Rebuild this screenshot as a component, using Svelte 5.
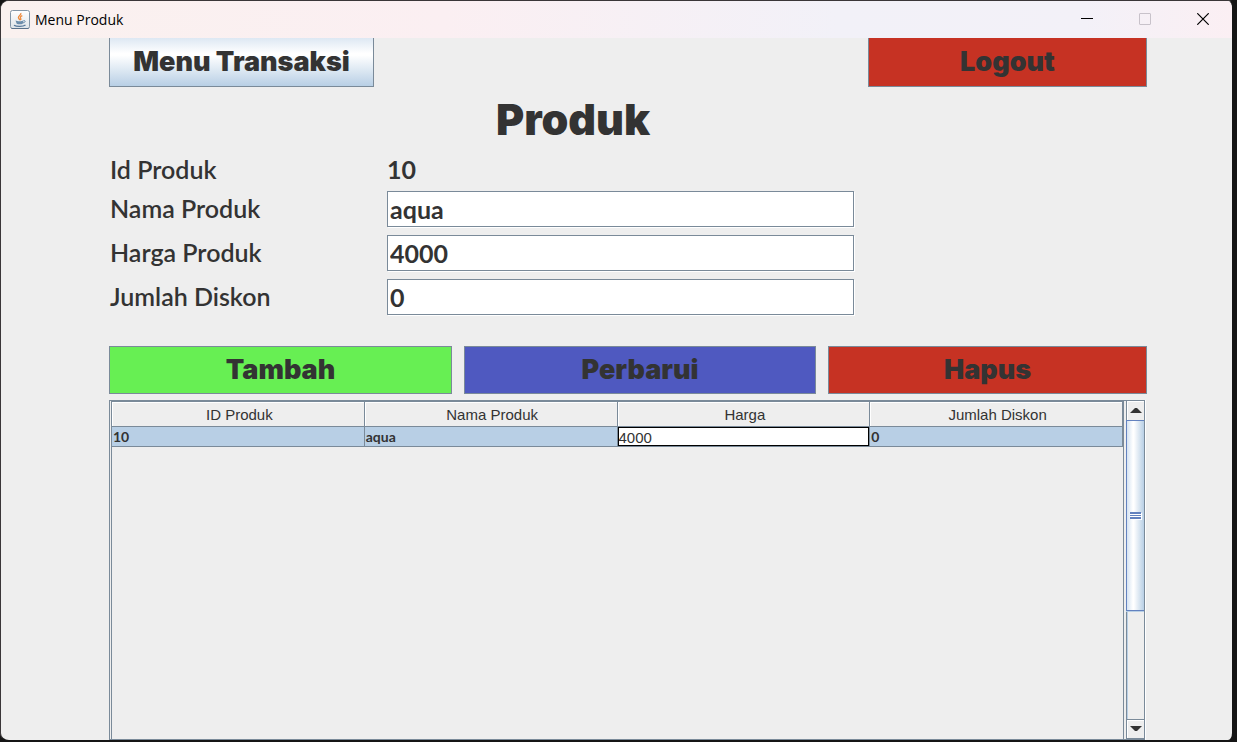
<script>
	let produk = $state({ id: '10', nama: 'aqua', harga: '4000', diskon: '0' });
	let editor = $state('4000');
</script>

<svelte:head>
	<title>Menu Produk</title>
</svelte:head>

<div class="window">
	<header class="titlebar">
		<svg class="titlebar__icon" viewBox="0 0 20 20" aria-hidden="true">
			<defs>
				<linearGradient id="plate" x1="0" y1="0" x2="0" y2="1">
					<stop offset="0" stop-color="#ffffff" />
					<stop offset="1" stop-color="#dde3e8" />
				</linearGradient>
			</defs>
			<rect x="0.5" y="0.5" width="19" height="18" rx="2" fill="url(#plate)" stroke="#8295a6" />
			<path d="M1.5 18.5h17" stroke="#58718a" />
			<path d="M10.8 3c1 2-2.800 2.800-2.400 4.600.2 1 1.300 1.500 1.400 2.700M12.300 5.600c-2 .9-2.400 1.700-1.600 2.700.5.7.2 1.300-.3 1.900" fill="none" stroke="#ee8a3c" stroke-width="1.300" />
			<path d="M5.500 10.500c2 .9 6 .9 8 0l-.8 3.200c-1.500.7-4.500.7-6 0z" fill="#6b8dab" />
			<path d="M13.500 10.600c2.400-.6 2.200 2-.6 2.300" fill="none" stroke="#6b8dab" />
			<path d="M4 15.200c2.500 1.600 9 1.500 11.500-.2" fill="none" stroke="#56789a" stroke-width="1.300" />
		</svg>
		<span class="titlebar__text">Menu Produk</span>
		<div class="titlebar__controls">
			<button type="button" aria-label="Minimize">
				<svg viewBox="0 0 12 12"><path d="M0 5.500h12" stroke="#000" /></svg>
			</button>
			<button type="button" aria-label="Maximize" disabled>
				<svg viewBox="0 0 12 12"><rect x="0.5" y="0.5" width="11" height="11" rx="0.5" fill="none" stroke="#c8c2ca" /></svg>
			</button>
			<button type="button" aria-label="Close">
				<svg viewBox="0 0 12 12"><path d="M0.300 0.300l11.400 11.400M11.700 0.300L0.300 11.700" stroke="#000" stroke-width="1.200" /></svg>
			</button>
		</div>
	</header>

	<main class="content">
		<nav class="toolbar">
			<button type="button" class="btn btn--menu">Menu Transaksi</button>
			<button type="button" class="btn btn--logout">Logout</button>
		</nav>

		<h1>Produk</h1>

		<form class="form">
			<div class="form__row form__row--id">
				<span class="form__label">Id Produk</span>
				<output class="form__value">{produk.id}</output>
			</div>
			<div class="form__row">
				<label class="form__label" for="nama">Nama Produk</label>
				<input class="form__input" id="nama" type="text" bind:value={produk.nama} />
			</div>
			<div class="form__row">
				<label class="form__label" for="harga">Harga Produk</label>
				<input class="form__input" id="harga" type="text" bind:value={produk.harga} />
			</div>
			<div class="form__row">
				<label class="form__label" for="diskon">Jumlah Diskon</label>
				<input class="form__input" id="diskon" type="text" bind:value={produk.diskon} />
			</div>
		</form>

		<div class="actions">
			<button type="button" class="btn btn--add">Tambah</button>
			<button type="button" class="btn btn--update">Perbarui</button>
			<button type="button" class="btn btn--delete">Hapus</button>
		</div>

		<div class="scrollpane">
			<div class="viewport">
				<table>
					<thead>
						<tr>
							<th>ID Produk</th>
							<th>Nama Produk</th>
							<th>Harga</th>
							<th>Jumlah Diskon</th>
						</tr>
					</thead>
					<tbody>
						<tr>
							<td>10</td>
							<td>aqua</td>
							<td class="editing"><input type="text" aria-label="Harga" bind:value={editor} /></td>
							<td>0</td>
						</tr>
					</tbody>
				</table>
			</div>
			<div class="scrollbar">
				<button type="button" class="scrollbar__button" aria-label="Scroll up">
					<svg viewBox="0 0 12 6"><path d="M5 0h2l5 5H0z" fill="#333" /></svg>
				</button>
				<div class="scrollbar__track">
					<div class="scrollbar__thumb">
						<span class="scrollbar__grip"></span>
					</div>
				</div>
				<button type="button" class="scrollbar__button scrollbar__button--down" aria-label="Scroll down">
					<svg viewBox="0 0 12 6"><path d="M0 0h12l-5 5H5z" fill="#333" /></svg>
				</button>
			</div>
		</div>
	</main>
</div>

<style>
	:global(body) {
		background: #151515;
	}

	.window {
		box-sizing: border-box;
		display: flex;
		flex-direction: column;
		height: 100vh;
		border: 1px solid #3a3638;
		border-right: 5px solid #151515;
		border-bottom: 2px solid #151515;
		border-radius: 9px;
		background: #eee;
		color: #333;
		font-family: Lato, 'Liberation Sans', sans-serif;
		overflow: hidden;
	}

	.titlebar {
		display: flex;
		flex: none;
		align-items: center;
		height: 37px;
		padding-left: 9px;
		background: linear-gradient(90deg, #faf1ef, #fbeff2 36%, #f2f1f8 68%, #f3f1f8 88%, #fbeff3);
	}

	.titlebar__icon {
		width: 20px;
		height: 20px;
	}

	.titlebar__text {
		flex: 1;
		padding-left: 5px;
		color: #000;
		font-family: 'Open Sans', 'Noto Sans', sans-serif;
		font-size: 14px;
	}

	.titlebar__controls {
		display: flex;
		height: 100%;
	}

	.titlebar__controls button {
		display: flex;
		align-items: center;
		justify-content: center;
		width: 58px;
		padding: 0 0 2px;
		border: 0;
		background: none;
	}

	.titlebar__controls svg {
		width: 12px;
		height: 12px;
	}

	.content {
		display: flex;
		flex: 1;
		flex-direction: column;
		min-height: 0;
		padding: 0 85px 0 108px;
	}

	.btn {
		padding: 0;
		border: 1px solid #7a8a99;
		color: #333;
		font-family: Inter, Lato, sans-serif;
		font-size: 27px;
		font-weight: 900;
		line-height: 32px;
	}

	.toolbar {
		display: flex;
		flex: none;
		justify-content: space-between;
		height: 49px;
	}

	.toolbar .btn {
		border-top: 0;
	}

	.btn--menu {
		width: 265px;
		background: linear-gradient(#dde8f3, #fff 32%, #fff 36%, #b8cfe5);
	}

	.btn--logout {
		width: 279px;
		background: #c63223;
	}

	h1 {
		margin: 6px 110px 7px 0;
		font-family: Inter, Lato, sans-serif;
		font-size: 43px;
		font-weight: 900;
		line-height: 52px;
		text-align: center;
	}

	.form {
		display: flex;
		flex-direction: column;
		gap: 6px;
		font-size: 25px;
		font-weight: bold;
	}

	.form__row {
		display: grid;
		grid-template-columns: 278px 469px;
		align-items: center;
		height: 38px;
		line-height: 30px;
	}

	.form__row--id {
		align-items: end;
		height: 32px;
	}

	.form__label {
		padding: 0 0 2px 1px;
		font-weight: 600;
	}

	.form__row--id .form__label {
		padding-bottom: 0;
	}

	.form__input {
		box-sizing: border-box;
		height: 36px;
		margin-right: 2px;
		padding: 0 2px;
		border: 1px solid #7a8a99;
		outline: 0;
		background: #fff;
		box-shadow: 1px 1px #fff;
		color: #333;
		font: inherit;
	}

	.actions {
		display: grid;
		flex: none;
		grid-template-columns: 343fr 352fr 319fr;
		gap: 12px;
		height: 48px;
		margin-top: 30px;
	}

	.btn--add {
		background: #67ef53;
	}

	.btn--update {
		background: #4f59c0;
	}

	.btn--delete {
		background: #c63223;
	}

	.scrollpane {
		display: flex;
		flex: 1;
		min-height: 0;
		margin: 6px 2px 0 0;
		border: 1px solid #7a8a99;
		border-right: 0;
		box-shadow: 1px 0 #fff;
	}

	.viewport {
		flex: 1;
		margin-left: 1px;
		border: solid #7a8a99;
		border-width: 1px 1px 0;
	}

	table {
		width: 100%;
		border-collapse: separate;
		border-spacing: 0;
		table-layout: fixed;
		font-size: 14px;
		font-weight: bold;
	}

	th {
		height: 22px;
		padding: 2px 0 0 3px;
		border-right: 1px solid #7a8a99;
		border-bottom: 1px solid #7a8a99;
		box-shadow: inset 1px 1px #fff;
		font-family: 'Liberation Sans', Arial, sans-serif;
		font-size: 15px;
		font-weight: normal;
		line-height: 22px;
	}

	td {
		height: 19px;
		padding: 0 1px;
		border-right: 1px solid #7a8a99;
		border-bottom: 1px solid #7a8a99;
		background: #b8cfe5;
		line-height: 19px;
	}

	td.editing {
		padding: 0;
	}

	.editing input {
		display: block;
		box-sizing: border-box;
		width: 100%;
		height: 19px;
		padding: 2px 0 0;
		border: 1px solid #000;
		outline: 0;
		background: #fff;
		color: #333;
		font-family: 'Liberation Sans', Arial, sans-serif;
		font-size: 15px;
		line-height: 16px;
	}

	.scrollbar {
		box-sizing: border-box;
		display: flex;
		flex-direction: column;
		width: 19px;
		margin-left: 2px;
		border: solid #7a8a99;
		border-width: 0 1px;
	}

	.scrollbar__button {
		display: flex;
		flex: none;
		align-items: center;
		justify-content: center;
		height: 19px;
		padding: 0;
		border: 0;
		background: #eee;
		box-shadow: inset 1px 1px #fff;
	}

	.scrollbar__button--down {
		height: 20px;
		border: solid #7a8a99;
		border-width: 1px 0;
	}

	.scrollbar__button svg {
		width: 12px;
		height: 6px;
	}

	.scrollbar__track {
		flex: 1;
		box-shadow: inset 1px 0 #b8cfe5;
	}

	.scrollbar__thumb {
		box-sizing: border-box;
		display: flex;
		align-items: center;
		justify-content: center;
		height: 64%;
		margin-left: -1px;
		border: 1px solid #6382bf;
		border-right: 0;
		background: linear-gradient(90deg, #d5e3f2, #fff 35%, #fff 40%, #b8cfe5);
		box-shadow: 0 1px #b8cfe5;
	}

	.scrollbar__grip {
		width: 11px;
		height: 7px;
		background: linear-gradient(#6382bf 2px, #fff 2px 3px, #6382bf 3px 4px, #fff 4px 5px, #6382bf 5px);
		box-shadow: 1px 1px #fff;
	}
</style>
